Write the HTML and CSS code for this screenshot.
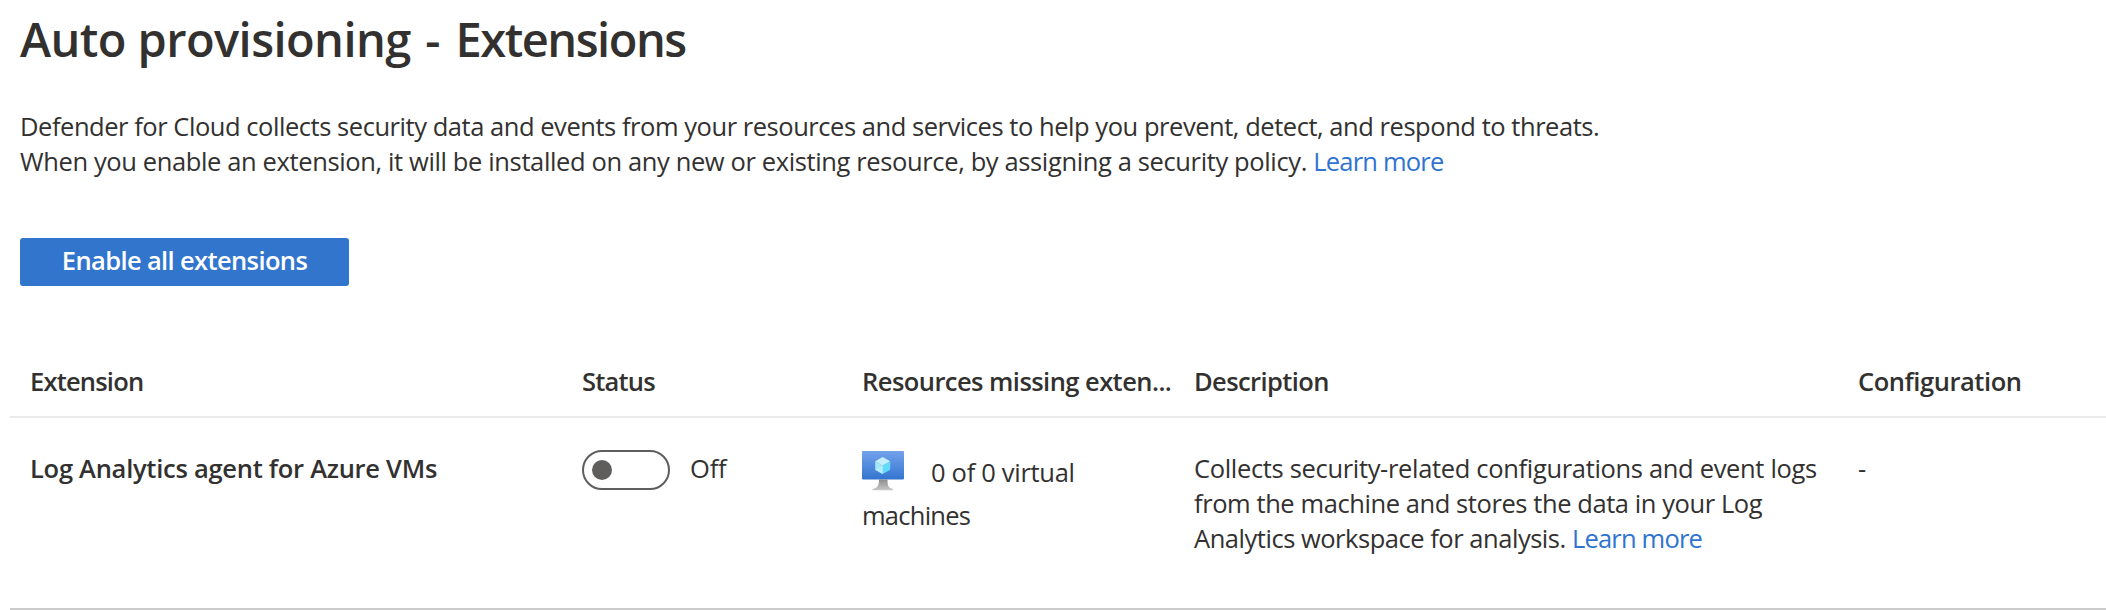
FILE: index.html
```html
<!DOCTYPE html>
<html lang="en">
<head>
<meta charset="utf-8">
<title>Auto provisioning - Extensions</title>
<link rel="stylesheet" href="styles.css">
</head>
<body>
<main class="page">
  <h1 class="title">Auto provisioning <span class="dash">-</span> <span class="title-end">Extensions</span></h1>
  <p class="intro"><span class="intro-a">Defender for Cloud collects security data and events from your resources and services to help you prevent, detect, and respond to threats.</span><br><span class="intro-b">When you enable an extension, it will be installed on any new or existing resource, by assigning a security policy. <a class="link" href="#">Learn more</a></span></p>
  <button class="primary" type="button"><span>Enable all extensions</span></button>
  <section class="grid">
    <div class="row head">
      <div class="cell"><span class="h-ext">Extension</span></div>
      <div class="cell"><span class="h-status">Status</span></div>
      <div class="cell"><span class="h-res">Resources missing exten...</span></div>
      <div class="cell"><span class="h-desc">Description</span></div>
      <div class="cell"><span class="h-conf">Configuration</span></div>
    </div>
    <div class="row item">
      <div class="cell name"><span>Log Analytics agent for Azure VMs</span></div>
      <div class="cell status"><span class="toggle" role="switch" aria-checked="false"><span class="knob"></span></span><span class="off">Off</span></div>
      <div class="cell resources">
        <div class="vm-line">
          <svg class="vm" width="42" height="40" viewBox="0 0 42 40" aria-hidden="true">
            <defs>
              <linearGradient id="screen" x1="0" y1="0" x2="0" y2="1"><stop offset="0" stop-color="#74a2ec"/><stop offset="1" stop-color="#3475d0"/></linearGradient>
              <linearGradient id="stand" x1="0" y1="0" x2="0" y2="1"><stop offset="0" stop-color="#8c8c8c"/><stop offset="1" stop-color="#c9c9c9"/></linearGradient>
            </defs>
            <rect width="42" height="28.4" rx=".8" fill="url(#screen)"/>
            <path d="M17 28.4h8.500c0 6 .8 8.500 5.500 9.500V39.300H10.500V37.900c5-.9 6.500-3.500 6.500-9.500z" fill="url(#stand)"/>
            <path d="M20.700 6l7.500 4.300-7.500 4.400-7.500-4.400z" fill="#c4effd"/>
            <path d="M13.200 10.300l7.500 4.400V23l-7.500-4.300z" fill="#a2e8fb"/>
            <path d="M28.200 10.300l-7.500 4.400V23l7.500-4.300z" fill="#62dcf8"/>
            <path d="M13.200 18.700l7.500-4V23z" fill="#b4edfc"/>
          </svg><span class="count">0 of 0 virtual</span>
        </div>
        <span class="machines">machines</span>
      </div>
      <div class="cell desc"><span class="d-a">Collects security-related configurations and event logs</span><br><span class="d-b">from the machine and stores the data in your Log</span><br><span class="d-c">Analytics workspace for analysis. <a class="link" href="#">Learn more</a></span></div>
      <div class="cell">-</div>
    </div>
  </section>
</main>
</body>
</html>
```
FILE: styles.css
```css
* { box-sizing: border-box; }
body { margin: 0; background: #fff; color: #323130; font-family: "Open Sans", "Noto Sans", sans-serif; font-size: 25.5px; line-height: 35px; white-space: nowrap; }
.page { width: 2106px; height: 610px; overflow: hidden; padding-top: 4px; display: flex; flex-direction: column; align-items: flex-start; }
.title { margin: 0 0 0 20px; height: 105px; font-size: 47px; line-height: 70px; font-weight: 600; letter-spacing: -.57px; }
.dash { margin: 0 4px 0 3px; }
.title-end { letter-spacing: -1.5px; }
.intro { margin: 0 0 0 20px; height: 129px; }
.intro-a { letter-spacing: -.455px; }
.intro-b { letter-spacing: -.373px; }
.link { color: #2f74d0; text-decoration: none; letter-spacing: -.8px; }
.primary { display: flex; align-items: center; justify-content: center; margin: 0 0 0 20px; padding: 0 0 3px; width: 329px; height: 48px; border: 0; border-radius: 3px; background: #3275cd; color: #fff; font: inherit; font-weight: 600; letter-spacing: -.63px; }
.grid { margin: 77px 0 0 10px; width: 2096px; }
.row { display: grid; grid-template-columns: 552px 280px 332px 664px 268px; padding-left: 20px; }
.head { height: 55px; padding-top: 1px; border-bottom: 2px solid #ebebe9; font-weight: 600; letter-spacing: -.6px; }
.h-ext, .h-status { letter-spacing: -.8px; }
.h-res { letter-spacing: -.55px; }
.h-conf { letter-spacing: -.45px; }
.item { height: 192px; padding-top: 33px; border-bottom: 2px solid #cbcbcb; }
.name { font-weight: 600; letter-spacing: -.27px; }
.status { display: flex; align-items: flex-start; gap: 20px; }
.toggle { display: flex; align-items: center; width: 88px; height: 40px; margin-top: -1px; padding-left: 8px; border: 2px solid #605e5c; border-radius: 20px; }
.knob { width: 20px; height: 20px; border-radius: 50%; background: #605e5c; }
.off { letter-spacing: -.2px; }
.vm-line { display: flex; gap: 27px; height: 43px; }
.count { margin-top: 4px; letter-spacing: -.3px; }
.machines { display: block; margin-top: 4px; letter-spacing: -.75px; }
.d-a { letter-spacing: -.33px; }
.d-b { letter-spacing: -.42px; }
.d-c { letter-spacing: -.47px; }
```
